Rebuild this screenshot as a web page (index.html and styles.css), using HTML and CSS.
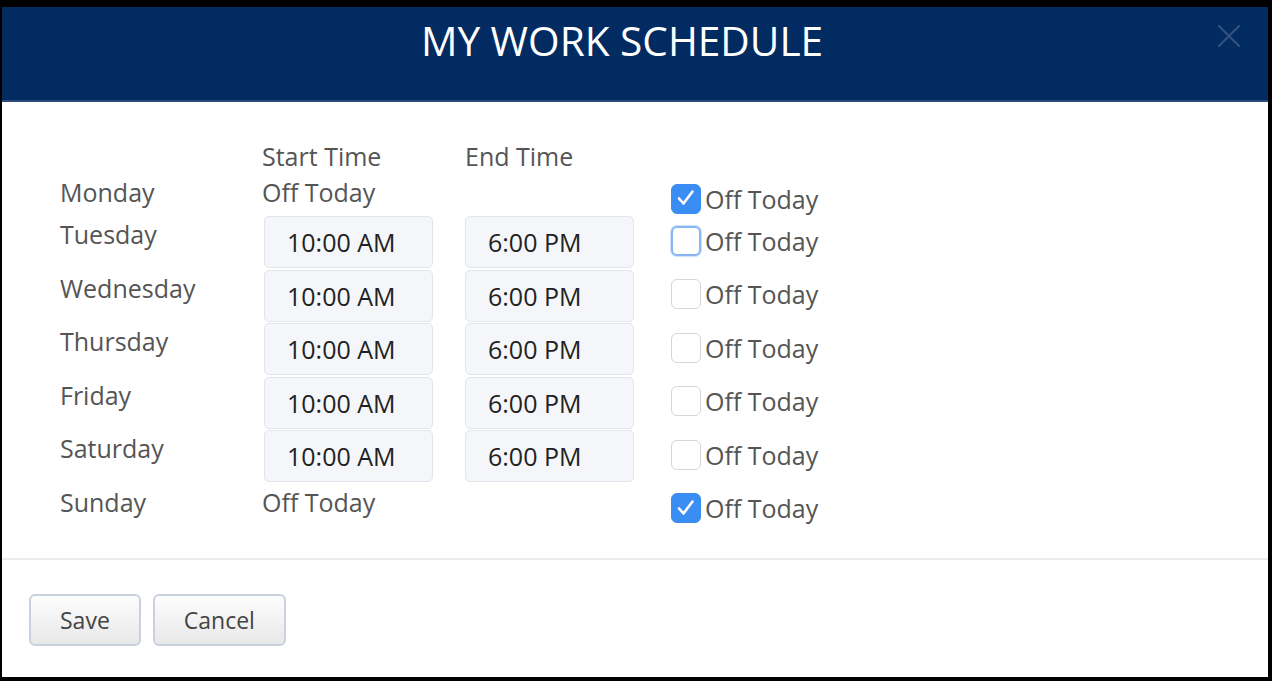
FILE: index.html
```html
<!DOCTYPE html>
<html lang="en">
<head>
<meta charset="utf-8">
<title>My Work Schedule</title>
<link rel="stylesheet" href="styles.css">
</head>
<body>
<div class="modal">
  <div class="modal-header">
    <h1 class="title">MY WORK SCHEDULE</h1>
    <button class="close" aria-label="Close">
      <svg width="24" height="24" viewBox="0 0 24 24"><path d="M2 2 L22 22 M22 2 L2 22" stroke="currentColor" stroke-width="2.4" fill="none" stroke-linecap="round"/></svg>
    </button>
  </div>
  <div class="modal-body">
    <div class="row row-head">
      <div></div>
      <div class="cell-text">Start Time</div>
      <div class="cell-text">End Time</div>
      <div></div>
    </div>
    <div class="row row-off">
      <div class="day">Monday</div>
      <div class="cell-text">Off Today</div>
      <div></div>
      <label class="off"><span class="box checked"><svg width="30" height="30" viewBox="0 0 30 30"><path d="M8 15.5 L12.5 20.5 L21.5 8.5" stroke="#fff" stroke-width="2.6" fill="none" stroke-linecap="round" stroke-linejoin="round"/></svg></span>Off Today</label>
    </div>
    <div class="row row-on">
      <div class="day">Tuesday</div>
      <div><input class="time start" type="text" value="10:00 AM" readonly></div>
      <div><input class="time" type="text" value="6:00 PM" readonly></div>
      <label class="off"><span class="box focus"></span>Off Today</label>
    </div>
    <div class="row row-on">
      <div class="day">Wednesday</div>
      <div><input class="time start" type="text" value="10:00 AM" readonly></div>
      <div><input class="time" type="text" value="6:00 PM" readonly></div>
      <label class="off"><span class="box"></span>Off Today</label>
    </div>
    <div class="row row-on">
      <div class="day">Thursday</div>
      <div><input class="time start" type="text" value="10:00 AM" readonly></div>
      <div><input class="time" type="text" value="6:00 PM" readonly></div>
      <label class="off"><span class="box"></span>Off Today</label>
    </div>
    <div class="row row-on">
      <div class="day">Friday</div>
      <div><input class="time start" type="text" value="10:00 AM" readonly></div>
      <div><input class="time" type="text" value="6:00 PM" readonly></div>
      <label class="off"><span class="box"></span>Off Today</label>
    </div>
    <div class="row row-on">
      <div class="day">Saturday</div>
      <div><input class="time start" type="text" value="10:00 AM" readonly></div>
      <div><input class="time" type="text" value="6:00 PM" readonly></div>
      <label class="off"><span class="box"></span>Off Today</label>
    </div>
    <div class="row row-off">
      <div class="day">Sunday</div>
      <div class="cell-text">Off Today</div>
      <div></div>
      <label class="off"><span class="box checked"><svg width="30" height="30" viewBox="0 0 30 30"><path d="M8 15.5 L12.5 20.5 L21.5 8.5" stroke="#fff" stroke-width="2.6" fill="none" stroke-linecap="round" stroke-linejoin="round"/></svg></span>Off Today</label>
    </div>
  </div>
  <div class="modal-footer">
    <button class="btn">Save</button>
    <button class="btn">Cancel</button>
  </div>
</div>
</body>
</html>
```
FILE: styles.css
```css
html, body {
  margin: 0;
  padding: 0;
  background: #000;
  height: 681px;
  overflow: hidden;
}
body {
  font-family: "Open Sans", "DejaVu Sans", sans-serif;
  padding-top: 7px;
  padding-left: 2px;
  box-sizing: border-box;
}
.modal {
  width: 1266px;
  height: 670px;
  background: #fff;
  display: flex;
  flex-direction: column;
}
.modal-header {
  position: relative;
  height: 93px;
  background: #012b61;
  border-bottom: 2px solid #2b4b7a;
  text-align: center;
  padding-right: 26px;
}
.title {
  margin: 0;
  padding-top: 7px;
  font-size: 40.6px;
  font-weight: 400;
  line-height: 54px;
  color: #fff;
  letter-spacing: 0;
}
.close {
  position: absolute;
  right: 27px;
  top: 17px;
  background: none;
  border: 0;
  padding: 0;
  width: 24px;
  height: 24px;
  color: #33507b;
}
.close svg { display: block; }
.modal-body {
  flex: 1;
  padding: 36px 0 0 58px;
}
.row {
  display: grid;
  grid-template-columns: 202px 203px 206px auto;
  font-size: 25px;
  color: #555;
}
.row-head { height: 36px; }
.row-off { height: 42px; }
.row-on { height: 53.5px; }
.day, .cell-text {
  line-height: 36px;
  white-space: nowrap;
}
.time {
  display: block;
  box-sizing: border-box;
  width: 169px;
  height: 52px;
  margin: 0;
  padding: 0 0 0 22px;
  border: 1px solid #e1e6ec;
  border-radius: 5px;
  background: #f4f6f9;
  font-family: inherit;
  font-size: 25px;
  color: #222;
  outline: none;
}
.time.start { margin-left: 2px; }
.off {
  display: flex;
  align-items: center;
  align-self: start;
  margin-top: 9.5px;
  height: 30px;
  line-height: 30px;
  gap: 4px;
  white-space: nowrap;
  color: #555;
}
.box {
  box-sizing: border-box;
  width: 30px;
  height: 30px;
  border: 1.5px solid #d6d6d6;
  border-radius: 6px;
  background: #fff;
  flex: none;
}
.box svg { display: block; margin: -1.5px; }
.box.checked {
  background: #3a8ef3;
  border-color: #3a8ef3;
}
.box.focus {
  border: 2px solid #86b7f3;
  box-shadow: 0 0 0 1px #cfe2fb;
}
.modal-footer {
  height: 119px;
  box-sizing: border-box;
  border-top: 2px solid #ececec;
  padding: 34px 0 0 27px;
  display: flex;
  align-items: flex-start;
  gap: 12px;
}
.btn {
  height: 52px;
  padding: 0 29px;
  border: 2px solid #c9d2dc;
  border-radius: 6px;
  background: linear-gradient(#fdfdfd, #e8e8e8);
  font-family: inherit;
  font-size: 23px;
  color: #444;
}
```
